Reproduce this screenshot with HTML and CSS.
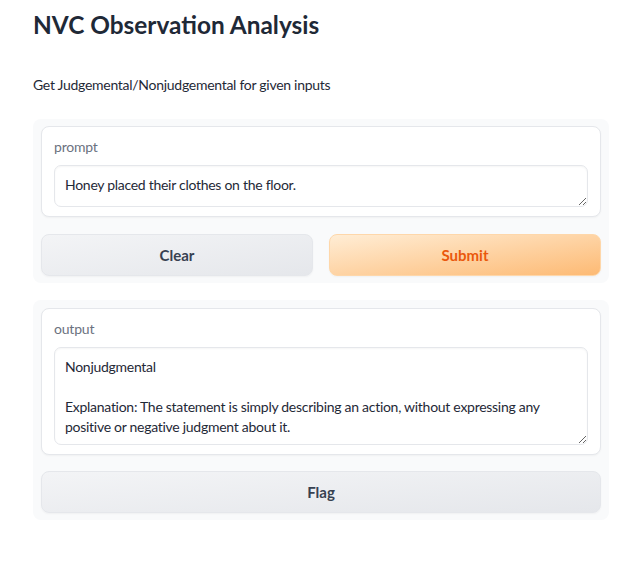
FILE: index.html
```html
<!DOCTYPE html>
<html>
<head>
<meta charset="utf-8">
<link rel="stylesheet" href="styles.css">
</head>
<body>
<div class="app">
  <h1 class="title">NVC Observation Analysis</h1>
  <p class="desc">Get Judgemental/Nonjudgemental for given inputs</p>
  <div class="panel">
    <div class="block">
      <div class="label">prompt</div>
      <textarea class="field one">Honey placed their clothes on the floor.</textarea>
    </div>
    <div class="row">
      <button class="btn secondary">Clear</button>
      <button class="btn primary">Submit</button>
    </div>
  </div>
  <div class="panel out">
    <div class="block">
      <div class="label">output</div>
      <textarea class="field four">Nonjudgmental

Explanation: The statement is simply describing an action, without expressing any positive or negative judgment about it.</textarea>
    </div>
    <button class="btn secondary full">Flag</button>
  </div>
</div>
</body>
</html>
```
FILE: styles.css
```css
html, body {
  margin: 0;
  padding: 0;
  background: #ffffff;
}
body {
  font-family: "Lato", "Noto Sans", sans-serif;
  color: #1f2937;
}
.app {
  width: 576px;
  padding: 0 0 0 33px;
}
.title {
  margin: 0;
  padding-top: 9px;
  font-size: 24.4px;
  line-height: 32px;
  font-weight: 700;
  color: #1f2937;
}
.desc {
  margin: 34px 0 0 0;
  font-size: 14px;
  line-height: 20px;
  letter-spacing: -0.28px;
  color: #1f2937;
}
.panel {
  margin-top: 24px;
  background: #f9fafb;
  border-radius: 8px;
  padding: 7px 8px;
  display: flex;
  flex-direction: column;
  gap: 17px;
}
.panel.out {
  margin-top: 17px;
  padding: 8px 8px 7px 8px;
  gap: 16px;
}
.block {
  background: #ffffff;
  border: 1px solid #e5e7eb;
  border-radius: 8px;
  box-shadow: 0 1px 2px rgba(0,0,0,0.04);
  padding: 10px 12px 9px 12px;
  display: flex;
  flex-direction: column;
  gap: 8px;
}
.label {
  font-size: 14px;
  line-height: 20px;
  letter-spacing: -0.2px;
  color: #6b7280;
}
.field {
  display: block;
  box-sizing: border-box;
  width: 100%;
  margin: 0;
  border: 1px solid #e5e7eb;
  border-radius: 7px;
  box-shadow: inset 0 1px 2px rgba(0,0,0,0.04);
  padding: 9px 10px;
  font-family: "Lato", "Noto Sans", sans-serif;
  font-size: 14px;
  line-height: 20px;
  letter-spacing: -0.28px;
  color: #1f2937;
  resize: vertical;
  outline: none;
  overflow: hidden;
}
.field.one { height: 42px; }
.field.four { height: 98px; }
.row {
  display: grid;
  grid-template-columns: 1fr 1fr;
  gap: 16px;
}
.btn {
  height: 42px;
  box-sizing: border-box;
  border-radius: 8px;
  font-family: "Lato", "Noto Sans", sans-serif;
  font-size: 15px;
  font-weight: 700;
  cursor: pointer;
  box-shadow: 0 1px 2px rgba(0,0,0,0.04);
}
.secondary {
  border: 1px solid #e5e7eb;
  background: linear-gradient(to bottom right, #f3f4f6, #e5e7eb);
  color: #374151;
}
.primary {
  border: 1px solid #fed7aa;
  background: linear-gradient(to bottom right, #ffedd5, #fdba74);
  color: #ea580c;
}
.full { width: 100%; }
```
